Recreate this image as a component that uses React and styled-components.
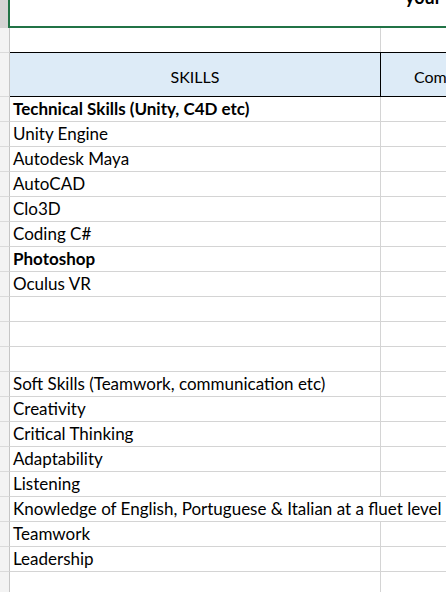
import React from "react";
import styled, { createGlobalStyle } from "styled-components";

const Global = createGlobalStyle`
  html, body { margin: 0; padding: 0; background: #fff; overflow: hidden; }
  body { font-family: Lato, "Open Sans", "Liberation Sans", sans-serif; }
`;

const Sheet = styled.div`
  width: 446px;
  height: 592px;
  overflow: hidden;
  display: flex;
  flex-direction: column;
  color: #000;
  font-size: 17px;
`;

const Row = styled.div`
  display: grid;
  grid-template-columns: 10px 371px 1fr;
  height: ${(p) => p.$h}px;
  flex: none;
`;

const RowHead = styled.div`
  box-sizing: border-box;
  background: ${(p) => (p.$selected ? "#d4d4d4" : "#f3f3f3")};
  border-right: 1px solid #c6c6c6;
  border-bottom: ${(p) => (p.$noLine ? "none" : "1px solid #dadada")};
`;

const Cell = styled.div`
  box-sizing: border-box;
  display: flex;
  align-items: flex-end;
  padding: 0 0 2px 3px;
  white-space: nowrap;
  overflow: visible;
  line-height: 20px;
  font-weight: ${(p) => (p.$bold ? 700 : 400)};
  border-bottom: 1px solid #d4d4d4;
  border-right: ${(p) => (p.$noRight ? "none" : "1px solid #d4d4d4")};
  grid-column: ${(p) => (p.$span ? "2 / 4" : "auto")};
  position: relative;
  z-index: ${(p) => (p.$span ? 1 : 0)};
  background: #fff;
`;

const TopCell = styled.div`
  grid-column: 2 / 4;
  box-sizing: border-box;
  margin-left: -2px;
  border-left: 2px solid #217346;
  border-bottom: 2px solid #217346;
  overflow: hidden;
  padding-left: 395px;
`;

const TopText = styled.span`
  display: block;
  margin-top: -13px;
  font-size: 18px;
  font-weight: 700;
  line-height: 20px;
  white-space: nowrap;
`;

const BlankCell = styled.div`
  box-sizing: border-box;
  border-right: 1px solid #d4d4d4;
`;

const HeadCell = styled.div`
  box-sizing: border-box;
  background: #ddebf7;
  border-top: 1px solid #000;
  border-bottom: 1px solid #000;
  border-right: ${(p) => (p.$last ? "none" : "1px solid #000")};
  display: flex;
  align-items: center;
  justify-content: ${(p) => (p.$left ? "flex-start" : "center")};
  padding: 3px 0 0 ${(p) => (p.$left ? "33px" : "0")};
  font-size: 16px;
  white-space: nowrap;
  overflow: hidden;
`;

const HeadRowHead = styled(RowHead)`
  border-top: 1px solid #dadada;
`;

const rows = [
  { t: "Technical Skills (Unity, C4D etc)", b: true },
  { t: "Unity Engine" },
  { t: "Autodesk Maya" },
  { t: "AutoCAD" },
  { t: "Clo3D" },
  { t: "Coding C#" },
  { t: "Photoshop", b: true },
  { t: "Oculus VR" },
  { t: "" },
  { t: "" },
  { t: "" },
  { t: "Soft Skills (Teamwork, communication etc)" },
  { t: "Creativity" },
  { t: "Critical Thinking" },
  { t: "Adaptability" },
  { t: "Listening" },
  { t: "Knowledge of English, Portuguese & Italian at a fluet level", span: true },
  { t: "Teamwork" },
  { t: "Leadership" },
  { t: "" },
  { t: "" },
];

export default function App() {
  return (
    <>
      <Global />
      <Sheet>
        <Row $h={28}>
          <RowHead $selected $noLine />
          <TopCell>
            <TopText>your</TopText>
          </TopCell>
        </Row>
        <Row $h={24}>
          <RowHead $noLine />
          <BlankCell />
          <div />
        </Row>
        <Row $h={45}>
          <HeadRowHead />
          <HeadCell>SKILLS</HeadCell>
          <HeadCell $last $left>Comments</HeadCell>
        </Row>
        {rows.map((r, i) => (
          <Row $h={25} key={i}>
            <RowHead />
            {r.span ? (
              <Cell $span $noRight>{r.t}</Cell>
            ) : (
              <>
                <Cell $bold={r.b}>{r.t}</Cell>
                <Cell $noRight />
              </>
            )}
          </Row>
        ))}
      </Sheet>
    </>
  );
}
